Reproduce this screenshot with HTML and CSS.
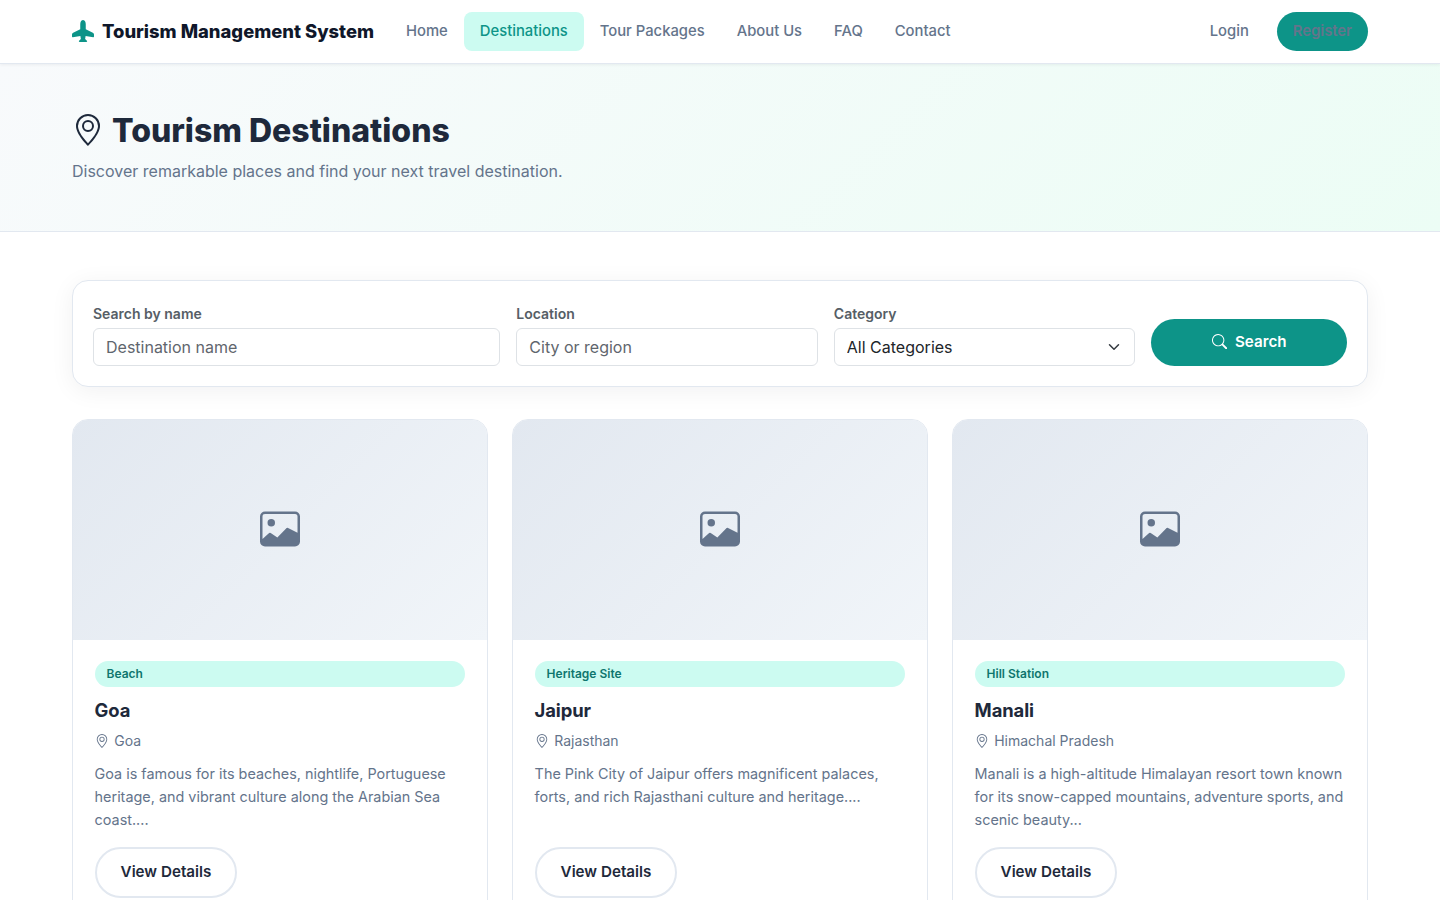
FILE: index.html
```html
<!DOCTYPE html>
<html lang="en">

<head>
    <meta charset="UTF-8">
    <meta name="viewport" content="width=device-width, initial-scale=1.0">
    <title>Tourism Management System</title>
    <link rel="stylesheet" href="styles.css">
</head>

<body>
    <!-- shared icons -->
    <svg class="sprite" xmlns="http://www.w3.org/2000/svg">
        <symbol id="pin" viewBox="0 0 16 16">
            <path d="M12.166 8.94c-.524 1.062-1.234 2.12-1.96 3.07A32 32 0 0 1 8 14.58a32 32 0 0 1-2.206-2.57c-.726-.95-1.436-2.008-1.96-3.07C3.304 7.867 3 6.862 3 6a5 5 0 0 1 10 0c0 .862-.305 1.867-.834 2.94M8 16s6-5.686 6-10A6 6 0 0 0 2 6c0 4.314 6 10 6 10" />
            <path d="M8 8a2 2 0 1 1 0-4 2 2 0 0 1 0 4m0 1a3 3 0 1 0 0-6 3 3 0 0 0 0 6" />
        </symbol>
        <symbol id="image" viewBox="0 0 16 16">
            <path d="M6.002 5.5a1.5 1.5 0 1 1-3 0 1.5 1.5 0 0 1 3 0" />
            <path d="M2.002 1a2 2 0 0 0-2 2v10a2 2 0 0 0 2 2h12a2 2 0 0 0 2-2V3a2 2 0 0 0-2-2zm12 1a1 1 0 0 1 1 1v6.5l-3.777-1.947a.5.5 0 0 0-.577.093l-3.71 3.71-2.66-1.772a.5.5 0 0 0-.63.062L1.002 12V3a1 1 0 0 1 1-1z" />
        </symbol>
    </svg>

    <nav class="navbar">
        <div class="container nav-inner">
            <a href="#" class="brand">
                <svg class="brand-icon" viewBox="0 0 16 16">
                    <path d="M6.428 1.151C6.708.591 7.213 0 8 0s1.292.592 1.572 1.151C9.861 1.73 10 2.431 10 3v3.691l5.17 2.585a1.5 1.5 0 0 1 .83 1.342V12a.5.5 0 0 1-.582.493l-5.507-.918-.375 2.253 1.318 1.318A.5.5 0 0 1 10.5 16h-5a.5.5 0 0 1-.354-.854l1.319-1.318-.376-2.253-5.507.918A.5.5 0 0 1 0 12v-1.382a1.5 1.5 0 0 1 .83-1.342L6 6.691V3c0-.568.14-1.271.428-1.849" />
                </svg>
                <span>Tourism Management System</span>
            </a>
            <ul class="nav-list">
                <li><a href="#" class="nav-link">Home</a></li>
                <li><a href="#" class="nav-link active">Destinations</a></li>
                <li><a href="#" class="nav-link">Tour Packages</a></li>
                <li><a href="#" class="nav-link">About Us</a></li>
                <li><a href="#" class="nav-link">FAQ</a></li>
                <li><a href="#" class="nav-link">Contact</a></li>
            </ul>
            <ul class="nav-list nav-auth">
                <li><a href="#" class="nav-link">Login</a></li>
                <li><a href="#" class="nav-link btn-register">Register</a></li>
            </ul>
        </div>
    </nav>

    <header class="page-header">
        <div class="container">
            <h1><svg class="title-icon"><use href="#pin" /></svg>Tourism Destinations</h1>
            <p>Discover remarkable places and find your next travel destination.</p>
        </div>
    </header>

    <main class="container main">
        <!-- search form -->
        <form class="filter">
            <div class="field col-4">
                <label for="name">Search by name</label>
                <input type="text" id="name" class="control" placeholder="Destination name">
            </div>
            <div class="field col-3">
                <label for="location">Location</label>
                <input type="text" id="location" class="control" placeholder="City or region">
            </div>
            <div class="field col-3">
                <label for="category">Category</label>
                <div class="select">
                    <select id="category" class="control">
                        <option>All Categories</option>
                        <option>Beach</option>
                        <option>Heritage Site</option>
                        <option>Hill Station</option>
                    </select>
                    <svg class="select-arrow" viewBox="0 0 16 16">
                        <path d="m2 5 6 6 6-6" />
                    </svg>
                </div>
            </div>
            <button type="button" class="btn-search col-2">
                <svg viewBox="0 0 16 16">
                    <path d="M11.742 10.344a6.5 6.5 0 1 0-1.397 1.398h-.001q.044.06.098.115l3.85 3.85a1 1 0 0 0 1.415-1.414l-3.85-3.85a1 1 0 0 0-.115-.1zM12 6.5a5.5 5.5 0 1 1-11 0 5.5 5.5 0 0 1 11 0" />
                </svg>
                <span>Search</span>
            </button>
        </form>

        <!-- destination cards -->
        <div class="cards">
            <article class="card">
                <div class="card-img"><svg><use href="#image" /></svg></div>
                <div class="card-body">
                    <span class="badge">Beach</span>
                    <h2>Goa</h2>
                    <p class="place"><svg><use href="#pin" /></svg>Goa</p>
                    <p class="desc">Goa is famous for its beaches, nightlife, Portuguese heritage, and vibrant culture along the Arabian Sea coast....</p>
                    <a href="#" class="btn-details">View Details</a>
                </div>
            </article>
            <article class="card">
                <div class="card-img"><svg><use href="#image" /></svg></div>
                <div class="card-body">
                    <span class="badge">Heritage Site</span>
                    <h2>Jaipur</h2>
                    <p class="place"><svg><use href="#pin" /></svg>Rajasthan</p>
                    <p class="desc">The Pink City of Jaipur offers magnificent palaces, forts, and rich Rajasthani culture and heritage....</p>
                    <a href="#" class="btn-details">View Details</a>
                </div>
            </article>
            <article class="card">
                <div class="card-img"><svg><use href="#image" /></svg></div>
                <div class="card-body">
                    <span class="badge">Hill Station</span>
                    <h2>Manali</h2>
                    <p class="place"><svg><use href="#pin" /></svg>Himachal Pradesh</p>
                    <p class="desc">Manali is a high-altitude Himalayan resort town known for its snow-capped mountains, adventure sports, and scenic beauty...</p>
                    <a href="#" class="btn-details">View Details</a>
                </div>
            </article>
        </div>
    </main>
</body>

</html>
```

FILE: styles.css
```css
* {
    box-sizing: border-box;
    margin: 0;
    padding: 0;
}

html {
    scrollbar-width: none;
}

body {
    font-family: Inter, sans-serif;
    font-size: 16px;
    line-height: 1.65;
    color: #1e293b;
    background: #fff;
}

a {
    text-decoration: none;
    color: inherit;
}

ul {
    list-style: none;
}

svg {
    fill: currentColor;
    flex-shrink: 0;
}

.sprite {
    display: none;
}

.container {
    width: 1320px;
    margin: 0 auto;
    padding: 0 12px;
}

/* navbar */
.navbar {
    position: relative;
    height: 64px;
    background: #fff;
    border-bottom: 1px solid #e2e8f0;
    box-shadow: 0 1px 3px rgba(15, 23, 42, .06);
}

.nav-inner {
    display: flex;
    align-items: center;
    height: 63px;
}

.brand {
    display: flex;
    align-items: center;
    gap: 8px;
    margin-right: 16px;
    font-size: 18.4px;
    font-weight: 800;
    color: #0f172a;
}

.brand-icon {
    width: 22px;
    height: 22px;
    color: #0d9488;
}

.nav-list {
    display: flex;
}

.nav-auth {
    gap: 12px;
    margin-left: auto;
}

.nav-link {
    display: block;
    height: 39px;
    padding: 0 16px;
    border-radius: 8px;
    font-size: 14.8px;
    font-weight: 500;
    line-height: 38px;
    color: #64748b;
}

.nav-link.active {
    color: #0d9488;
    background: #ccfbf1;
}

.btn-register {
    border-radius: 50px;
    font-weight: 600;
    background: #0d9488;
}

/* page title */
.page-header {
    height: 168px;
    padding-top: 44px;
    background: linear-gradient(135deg, #f8fafc 0%, #ecfdf5 100%);
    border-bottom: 1px solid #e2e8f0;
}

.page-header h1 {
    display: flex;
    align-items: center;
    gap: 8px;
    font-size: 32px;
    font-weight: 800;
    line-height: 45px;
}

.title-icon {
    width: 32px;
    height: 32px;
    margin-bottom: 2px;
}

.page-header p {
    margin-top: 5px;
    color: #64748b;
}

.main {
    padding-top: 48px;
}

/* search form */
.filter {
    display: grid;
    grid-template-columns: repeat(12, 1fr);
    column-gap: 16px;
    align-items: end;
    height: 107px;
    padding: 20px;
    margin-bottom: 32px;
    background: #fff;
    border: 1px solid #e2e8f0;
    border-radius: 16px;
    box-shadow: 0 4px 24px rgba(15, 23, 42, .06);
}

.col-2 {
    grid-column: span 2;
}

.col-3 {
    grid-column: span 3;
}

.col-4 {
    grid-column: span 4;
}

.field label {
    display: block;
    margin-bottom: 3px;
    font-size: 14px;
    font-weight: 600;
    line-height: 23px;
    color: #565e66;
}

.control {
    display: block;
    width: 100%;
    height: 38px;
    padding: 0 12px;
    font: 400 16px/24px Inter, sans-serif;
    color: #212529;
    background: #fff;
    border: 1px solid #dee2e6;
    border-radius: 6px;
    appearance: none;
}

.control::placeholder {
    color: #5f666d;
}

.select {
    position: relative;
}

.select-arrow {
    position: absolute;
    right: 13px;
    top: 11px;
    width: 16px;
    height: 16px;
    fill: none;
    stroke: #343a40;
    stroke-width: 2;
    stroke-linecap: round;
    stroke-linejoin: round;
    transform: scale(.75);
    pointer-events: none;
}

.btn-search {
    display: flex;
    align-items: center;
    justify-content: center;
    gap: 8px;
    height: 47px;
    padding-bottom: 2px;
    border: 0;
    border-radius: 50px;
    font: 600 15.2px Inter, sans-serif;
    color: #fff;
    background: #0d9488;
}

.btn-search svg {
    width: 15.2px;
    height: 15.2px;
}

/* cards */
.cards {
    display: grid;
    grid-template-columns: repeat(3, 1fr);
    gap: 24px;
}

.card {
    overflow: hidden;
    background: #fff;
    border: 1px solid #e2e8f0;
    border-radius: 16px;
}

.card-img {
    display: flex;
    align-items: center;
    justify-content: center;
    height: 220px;
    padding-bottom: 2px;
    color: #64748b;
    background: linear-gradient(135deg, #e2e8f0, #f1f5f9);
}

.card-img svg {
    width: 40px;
    height: 40px;
}

.card-body {
    display: flex;
    flex-direction: column;
    height: 280px;
    padding: 21px 21.6px 22px;
}

.badge {
    height: 26px;
    padding: 0 12px;
    border-radius: 50px;
    font-size: 12px;
    font-weight: 600;
    line-height: 25px;
    color: #0f766e;
    background: #ccfbf1;
}

.card h2 {
    margin: 8px 0 4px;
    font-size: 18.4px;
    font-weight: 700;
    line-height: 30px;
    letter-spacing: -0.005em;
}

.place {
    display: flex;
    align-items: center;
    gap: 5.6px;
    margin-bottom: 9px;
    font-size: 14px;
    line-height: 24px;
    color: #64748b;
}

.place svg {
    width: 14px;
    height: 14px;
}

.desc {
    font-size: 14.4px;
    line-height: 23px;
    color: #64748b;
}

.btn-details {
    align-self: flex-start;
    margin-top: auto;
    height: 51px;
    padding: 0 24px;
    border: 2px solid #e2e8f0;
    border-radius: 50px;
    font-size: 15.2px;
    font-weight: 600;
    line-height: 46px;
    color: #1e293b;
}
```
